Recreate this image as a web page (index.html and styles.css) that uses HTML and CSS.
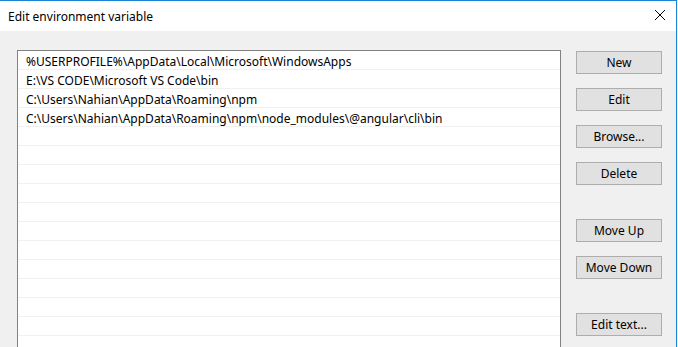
FILE: index.html
```html
<!DOCTYPE html>
<html lang="en">
<head>
    <meta charset="UTF-8">
    <title>Edit environment variable</title>
    <link rel="stylesheet" href="styles.css">
</head>
<body>
    <div class="window">
        <div class="titlebar">
            <span class="title">Edit environment variable</span>
            <svg class="close" width="12" height="12" viewBox="0 0 12 12">
                <path d="M1 1 L11 11 M11 1 L1 11" stroke="#000" stroke-width="1" fill="none"/>
            </svg>
        </div>
        <div class="content">
            <div class="list">
                <div class="row">%USERPROFILE%\AppData\Local\Microsoft\WindowsApps</div>
                <div class="row">E:\VS CODE\Microsoft VS Code\bin</div>
                <div class="row">C:\Users\Nahian\AppData\Roaming\npm</div>
                <div class="row">C:\Users\Nahian\AppData\Roaming\npm\node_modules\@angular\cli\bin</div>
                <div class="row"></div>
                <div class="row"></div>
                <div class="row"></div>
                <div class="row"></div>
                <div class="row"></div>
                <div class="row"></div>
                <div class="row"></div>
                <div class="row"></div>
                <div class="row"></div>
                <div class="row"></div>
                <div class="row"></div>
                <div class="row"></div>
            </div>
            <div class="buttons">
                <button class="btn">New</button>
                <button class="btn">Edit</button>
                <button class="btn">Browse...</button>
                <button class="btn">Delete</button>
                <button class="btn sep">Move Up</button>
                <button class="btn">Move Down</button>
                <button class="btn sep">Edit text...</button>
            </div>
        </div>
    </div>
</body>
</html>
```

FILE: styles.css
```css
*{
    padding: 0;
    margin: 0;
    box-sizing: border-box;
}
body{
    width: 678px;
    height: 347px;
    overflow: hidden;
    background-color: #f0f0f0;
    font-family: "Noto Sans", "Open Sans", sans-serif;
    font-size: 12px;
    color: #000;
}
.window{
    width: 677px;
    height: 347px;
    overflow: hidden;
    border-top: 1px solid #1883d7;
    border-right: 1px solid #1883d7;
    background-color: #f0f0f0;
}
.titlebar{
    height: 30px;
    background-color: #fff;
    display: flex;
    align-items: center;
    justify-content: space-between;
    padding-left: 8px;
    padding-right: 10px;
}
.title{
    font-size: 12px;
    margin-top: 1px;
}
.close{
    margin-bottom: 2px;
}
.content{
    display: flex;
    padding: 19px 0 0 17px;
}
.list{
    width: 544px;
    height: 320px;
    background-color: #fff;
    border: 1px solid #828282;
    border-bottom: none;
}
.row{
    height: 19px;
    line-height: 21px;
    padding-left: 8px;
    border-bottom: 1px solid #f0f0f0;
    white-space: nowrap;
}
.buttons{
    display: flex;
    flex-direction: column;
    gap: 14px;
    margin-left: 15px;
    padding-top: 1px;
}
.btn{
    width: 86px;
    height: 23px;
    background-color: #e1e1e1;
    border: 1px solid #adadad;
    font-family: inherit;
    font-size: 12px;
    color: #000;
}
.btn.sep{
    margin-top: 20px;
}
```
